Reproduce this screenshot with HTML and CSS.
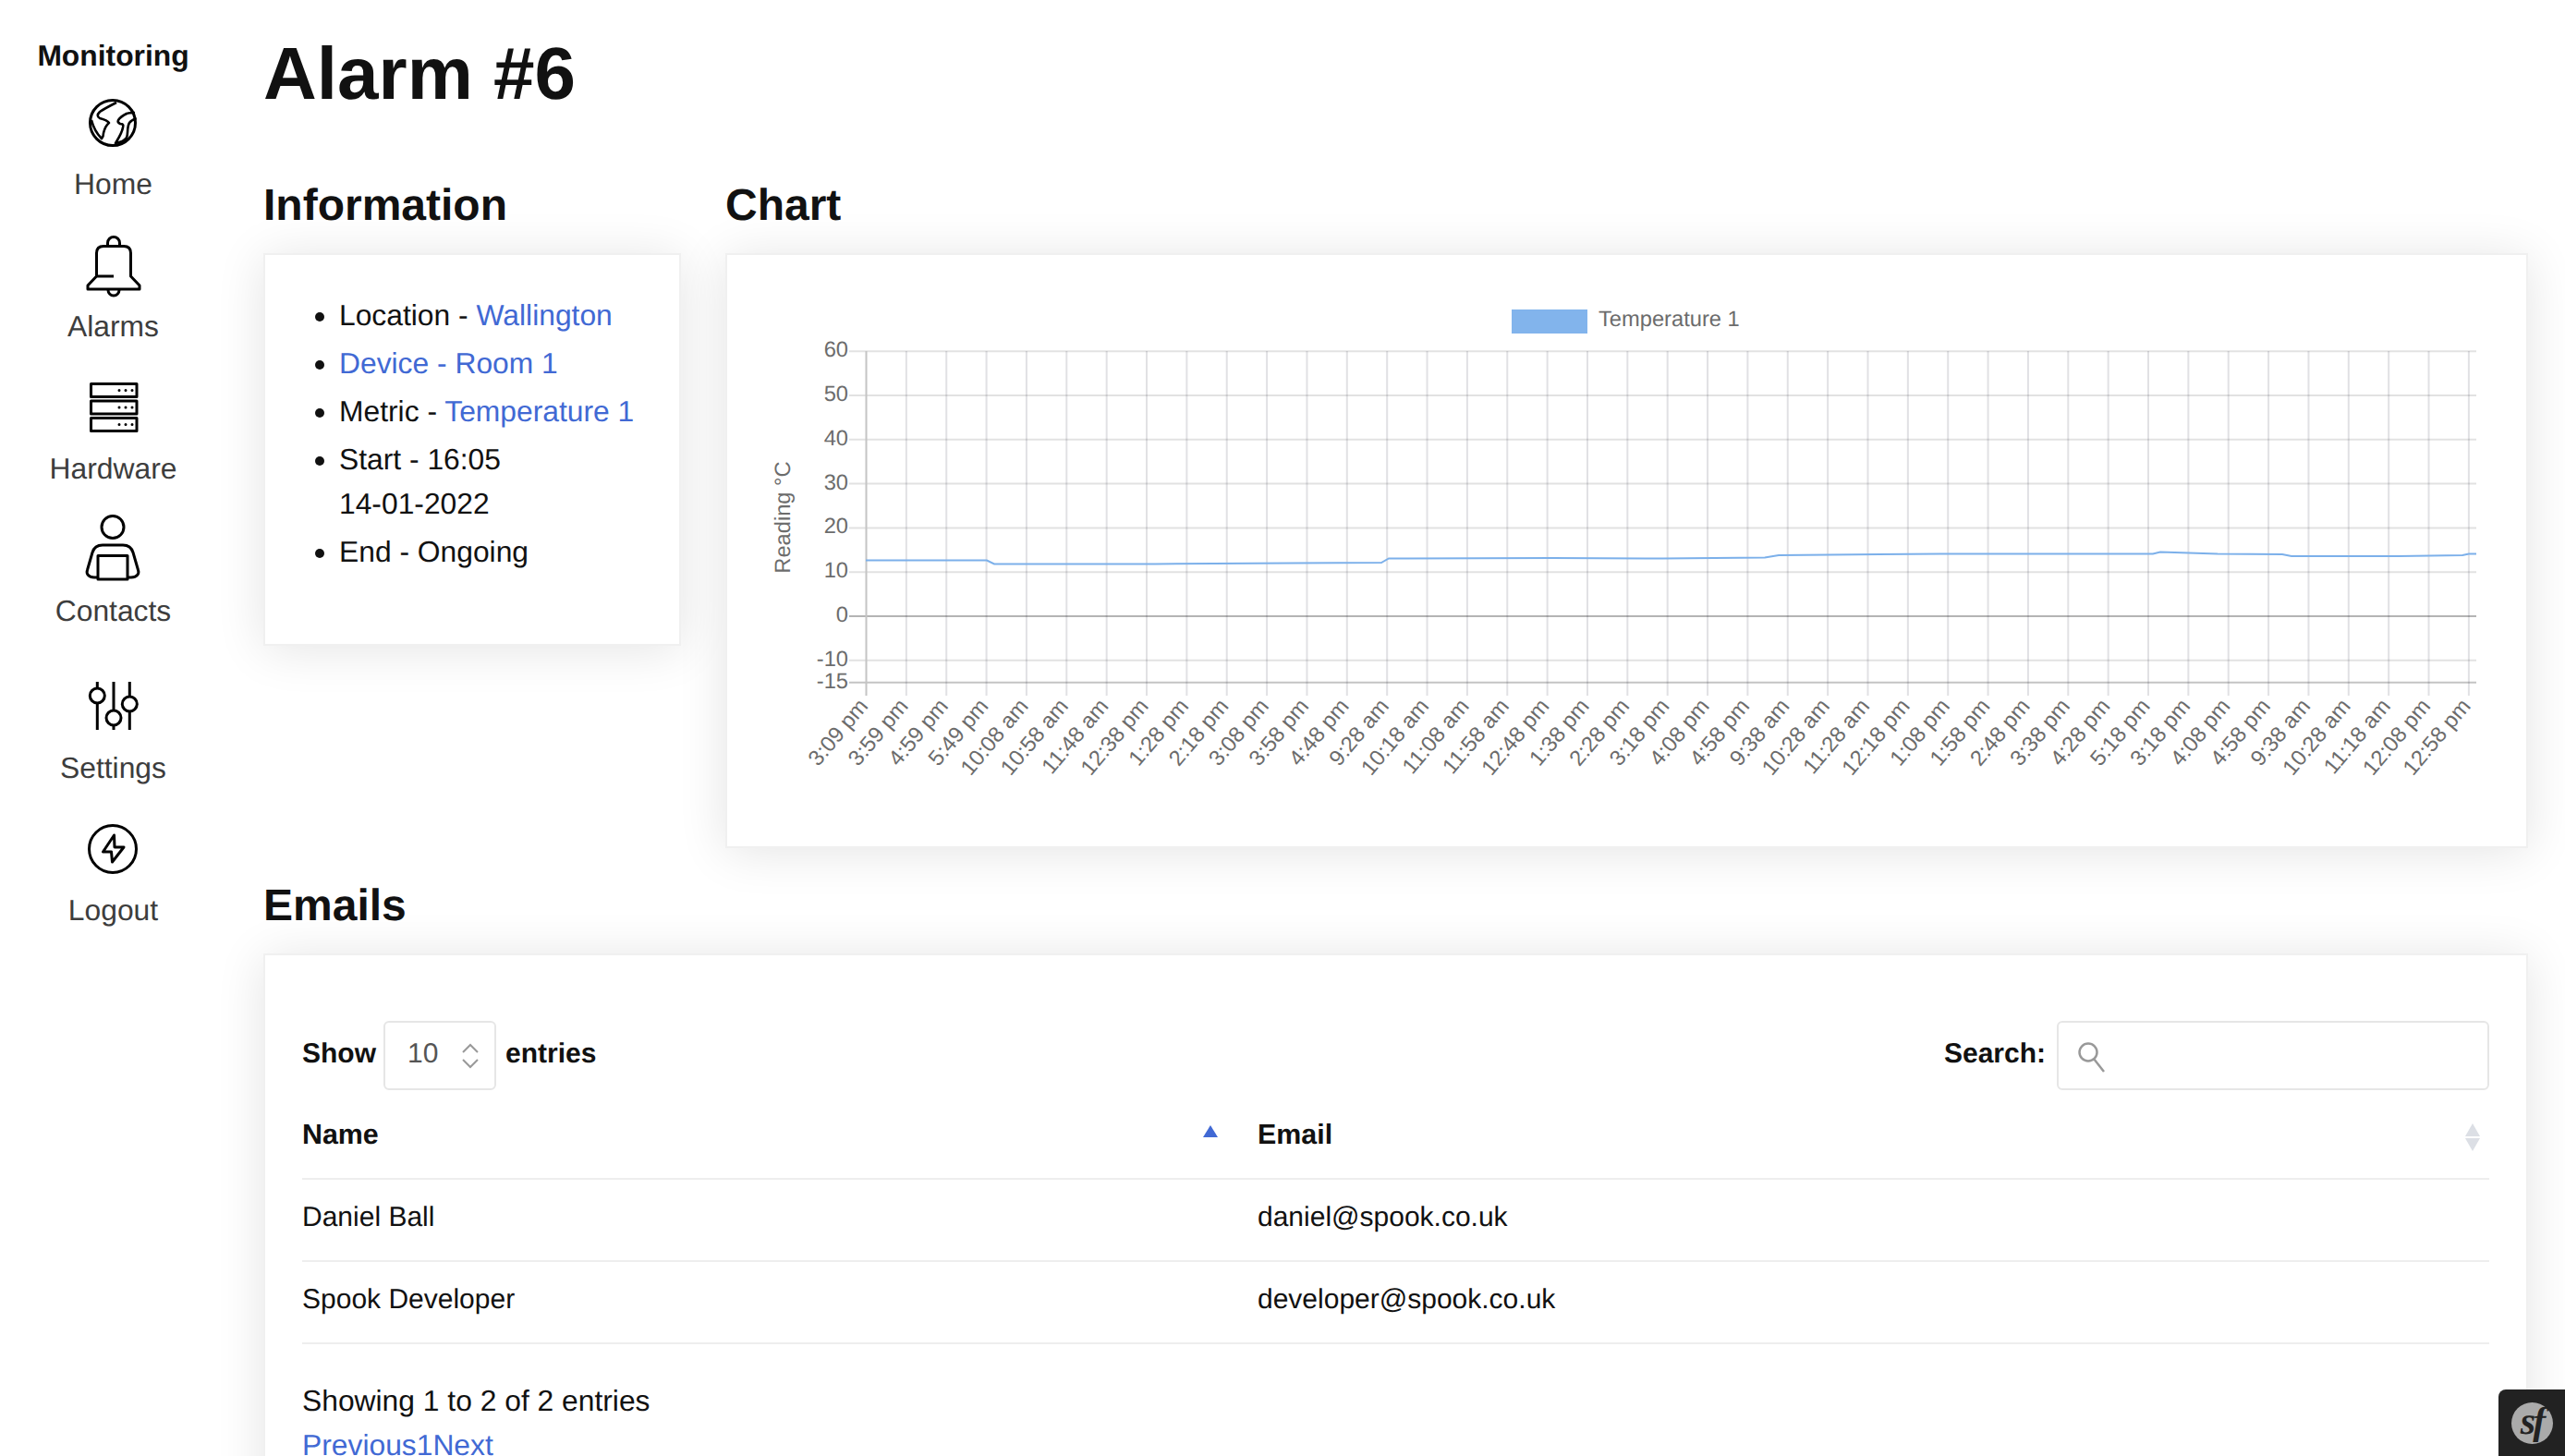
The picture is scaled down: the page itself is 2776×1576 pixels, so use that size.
FILE: index.html
```html
<!DOCTYPE html>
<html lang="en">

<head>
    <meta charset="UTF-8">
    <title>Alarm #6</title>
    <link rel="stylesheet" href="styles.css">
</head>

<body>

    <nav class="sidebar">
        <div class="brand">Monitoring</div>
        <a class="nav-item" href="#">
            <svg class="nav-icon nav-icon-globe" viewBox="0 0 64 64">
                <circle cx="32" cy="32" r="24.5" />
                <path d="M36 10C30 13 24 16 18 20C15 23 15 25 18 27C22 28 26 29 28 32C24 35 23 39 22 43C22 46 21 48 20 49C15 44 11 37 9 29" />
                <path d="M56 21C52 21 49 21 47 22C43 24 40 26 38 29C37 31 38 32 40 33C43 33 44 34 43 37C42 43 38 49 35 54C41 53 45 51 47 48C49 44 47 37 50 32C52 29 55 28 57.5 27" />
            </svg>
            <span>Home</span>
        </a>
        <a class="nav-item" href="#">
            <svg class="nav-icon" viewBox="0 0 64 64">
                <path d="M13.5 44V19Q13.5 11.5 21 11.5H43Q50.5 11.5 50.5 19V44L60 54V58H4V54L13.5 44H32" />
                <path d="M25.5 11.5V8a6.5 6.5 0 0 1 13 0V11.5" />
                <path d="M26 58v1a6 6 0 0 0 12 0v-1" />
            </svg>
            <span>Alarms</span>
        </a>
        <a class="nav-item" href="#">
            <svg class="nav-icon" viewBox="0 0 64 64">
                <rect x="7.5" y="6.5" width="49.5" height="14" />
                <rect x="7.5" y="25" width="49.5" height="14" />
                <rect x="7.5" y="43.5" width="49.5" height="14" />
                <path class="dots" d="M38 13.5h.01M45 13.5h.01M52 13.5h.01M38 32h.01M45 32h.01M52 32h.01M38 50.5h.01M45 50.5h.01M52 50.5h.01" />
            </svg>
            <span>Hardware</span>
        </a>
        <a class="nav-item" href="#">
            <svg class="nav-icon" viewBox="0 0 64 64">
                <circle cx="32" cy="7.5" r="12" />
                <path d="M16 62H12C6 62 3 58 4.5 54L10 35C11.5 30 15 27 21 27H43C49 27 52.5 30 54 35L59.5 54C61 58 58 62 52 62H48" />
                <rect x="16" y="38.5" width="32" height="25.5" />
            </svg>
            <span>Contacts</span>
        </a>
        <a class="nav-item nav-item-settings" href="#">
            <svg class="nav-icon" viewBox="0 0 64 64">
                <path d="M14.3 5V57M32 5V57M49.3 5V57" />
                <circle class="knob" cx="14.3" cy="20" r="8" />
                <circle class="knob" cx="32" cy="44" r="8" />
                <circle class="knob" cx="49.3" cy="29" r="8" />
            </svg>
            <span>Settings</span>
        </a>
        <a class="nav-item" href="#">
            <svg class="nav-icon" viewBox="0 0 64 64">
                <circle cx="32" cy="32" r="25.5" />
                <path d="M33.5 17L21.5 35H30.5L31.5 46L44 30H34Z" />
            </svg>
            <span>Logout</span>
        </a>
    </nav>

    <main class="content">
        <h1>Alarm #6</h1>

        <div class="top-row">
            <section class="info-col">
                <h2>Information</h2>
                <div class="card info-card">
                    <ul class="info-list">
                        <li>Location - <a href="#">Wallington</a></li>
                        <li><a href="#">Device - Room 1</a></li>
                        <li>Metric - <a href="#">Temperature 1</a></li>
                        <li>Start - 16:05<br>14-01-2022</li>
                        <li>End - Ongoing</li>
                    </ul>
                </div>
            </section>
            <section class="chart-col">
                <h2>Chart</h2>
                <div class="card chart-card" id="chart"></div>
            </section>
        </div>

        <h2 class="emails-title">Emails</h2>
        <div class="card emails-card">
            <div class="table-tools">
                <div class="length-control">
                    <span class="tool-label">Show</span>
                    <div class="select-box">
                        <span class="tool-label">10</span>
                        <svg class="select-arrows" viewBox="0 0 20 32">
                            <path d="M2 12L10 4L18 12M2 20L10 28L18 20" />
                        </svg>
                    </div>
                    <span class="tool-label">entries</span>
                </div>
                <div class="search-control">
                    <span class="tool-label">Search:</span>
                    <div class="search-box">
                        <svg class="search-icon" viewBox="0 0 32 32">
                            <circle cx="12" cy="12" r="9.5" />
                            <path d="M18 19L29 33" />
                        </svg>
                    </div>
                </div>
            </div>

            <table class="emails-table">
                <thead>
                    <tr>
                        <th class="col-name">
                            <div class="th-inner">Name<span class="sort-up"></span></div>
                        </th>
                        <th>
                            <div class="th-inner">Email<span class="sort-both"><i></i><i></i></span></div>
                        </th>
                    </tr>
                </thead>
                <tbody>
                    <tr>
                        <td>Daniel Ball</td>
                        <td>daniel@spook.co.uk</td>
                    </tr>
                    <tr>
                        <td>Spook Developer</td>
                        <td>developer@spook.co.uk</td>
                    </tr>
                </tbody>
            </table>

            <div class="table-info">Showing 1 to 2 of 2 entries</div>
            <div class="pager"><a href="#">Previous</a><a href="#">1</a><a href="#">Next</a></div>
        </div>
    </main>

    <div class="sf-toolbar">
        <div class="sf-logo">sf</div>
    </div>

    <script src="chart.js"></script>
</body>

</html>
```

FILE: styles.css
```css
html, body{
    height: 100%;
    overflow: hidden;
}

body{
    margin: 0;
    display: flex;
    background-color: #ffffff;
    color: #111111;
    font-family: "Liberation Sans", Arial, sans-serif;
    font-size: 31.8px;
    line-height: 48px;
    text-rendering: geometricPrecision;
}

a{
    color: #4169d4;
    text-decoration: none;
}

.sidebar{
    width: 245px;
    padding-top: 36px;
    margin-right: 40px;
    flex-shrink: 0;
    display: flex;
    flex-direction: column;
    align-items: center;
}

.brand{
    font-weight: 700;
    margin-bottom: 17px;
}

.nav-item{
    display: flex;
    flex-direction: column;
    align-items: center;
    gap: 10px;
    height: 122px;
    margin-bottom: 32px;
    color: #3d3d3d;
}

.nav-item-settings{
    margin-top: 16px;
}

.nav-icon{
    width: 64px;
    height: 64px;
    overflow: visible;
    fill: none;
    stroke: #000000;
    stroke-width: 3;
    stroke-linejoin: round;
}

.nav-icon-globe path{
    stroke-width: 2.6;
}

.nav-icon .dots{
    stroke-width: 3;
    stroke-linecap: round;
}

.nav-icon .knob{
    fill: #ffffff;
}

.content{
    flex: 1;
    min-width: 0;
    padding: 32px 40px 0 0;
}

h1{
    margin: 0 0 66px;
    font-size: 80px;
    line-height: 96px;
    font-weight: 700;
}

h2{
    margin: 0 0 22px;
    font-size: 48px;
    line-height: 58px;
    font-weight: 700;
}

.top-row{
    display: flex;
    align-items: flex-start;
    gap: 48px;
}

.info-col{
    width: 452px;
    flex-shrink: 0;
}

.chart-col{
    flex: 1;
    min-width: 0;
}

.card{
    box-sizing: border-box;
    background-color: #ffffff;
    border: 2px solid #f0f0f0;
    box-shadow: 0 4px 50px rgba(0, 0, 0, 0.11);
}

.info-card{
    height: 425px;
    padding: 41px 40px 40px;
}

.info-list{
    margin: 0;
    padding-left: 40px;
}

.info-list li{
    margin-bottom: 4px;
}

.chart-card{
    height: 644px;
}

.chart-card svg{
    display: block;
}

.chart-card .grid-h{
    stroke: #e2e2e2;
    stroke-width: 2;
}

.chart-card .grid-v{
    stroke: rgba(20, 20, 50, 0.13);
    stroke-width: 2;
}

.chart-card .axis{
    stroke: #c4c4c4;
    stroke-width: 2;
}

.chart-card .zero{
    stroke: #b4b4b4;
    stroke-width: 2;
}

.chart-card .series{
    fill: none;
    stroke: #7cb0ea;
    stroke-width: 2;
}

.chart-card .swatch{
    fill: #82b4ec;
}

.chart-card text{
    fill: #6c6c6c;
    font-size: 23.7px;
}

.emails-title{
    margin: 34px 0 22px;
}

.emails-card{
    height: 700px;
    padding: 71px 40px 0;
}

.table-tools{
    display: flex;
    justify-content: space-between;
    align-items: center;
    height: 75px;
    font-size: 30px;
    font-weight: 700;
}

.tool-label{
    padding-bottom: 3px;
}

.length-control,
.search-control{
    display: flex;
    align-items: center;
    gap: 8px;
}

.search-control{
    gap: 12px;
}

.select-box{
    box-sizing: border-box;
    display: flex;
    align-items: center;
    justify-content: space-between;
    width: 122px;
    height: 75px;
    margin-right: 2px;
    padding: 0 16px 0 24px;
    border: 2px solid #e6e6e6;
    border-radius: 6px;
    color: #555555;
    font-weight: 400;
}

.select-arrows{
    width: 20px;
    height: 32px;
    fill: none;
    stroke: #999999;
    stroke-width: 2;
}

.search-box{
    box-sizing: border-box;
    display: flex;
    align-items: center;
    width: 468px;
    height: 75px;
    padding-left: 20px;
    border: 2px solid #e6e6e6;
    border-radius: 6px;
}

.search-icon{
    width: 32px;
    height: 32px;
    overflow: visible;
    fill: none;
    stroke: #999999;
    stroke-width: 2.5;
}

.emails-table{
    width: 100%;
    border-collapse: collapse;
    font-size: 30px;
}

.emails-table th{
    height: 95px;
    padding: 0;
    text-align: left;
    font-size: 30.4px;
    font-weight: 700;
    border-bottom: 2px solid #eeeeee;
}

.emails-table .col-name{
    width: 1034px;
    padding-right: 33px;
    box-sizing: border-box;
}

.emails-table td{
    height: 81px;
    padding: 0 0 6px;
    border-bottom: 2px solid #eeeeee;
}

.th-inner{
    display: flex;
    justify-content: space-between;
    align-items: center;
    padding-right: 10px;
}

.sort-up{
    width: 0;
    height: 0;
    border-left: 8px solid transparent;
    border-right: 8px solid transparent;
    border-bottom: 13px solid #4169d4;
    margin-bottom: 6px;
}

.sort-both{
    display: flex;
    flex-direction: column;
    gap: 2px;
    margin-top: 6px;
}

.sort-both i{
    display: block;
    width: 0;
    height: 0;
    border-left: 8px solid transparent;
    border-right: 8px solid transparent;
    border-bottom: 14px solid #dcdfe5;
}

.sort-both i + i{
    border-bottom: none;
    border-top: 14px solid #dcdfe5;
}

.table-info{
    margin-top: 37px;
}

.sf-toolbar{
    position: fixed;
    right: 0;
    bottom: 0;
    width: 72px;
    height: 72px;
    display: flex;
    align-items: center;
    justify-content: center;
    background-color: #222222;
    border-top-left-radius: 8px;
}

.sf-logo{
    width: 45px;
    height: 45px;
    border-radius: 50%;
    background-color: #aaaaaa;
    color: #222222;
    font-family: "Liberation Serif", serif;
    font-style: italic;
    font-weight: 700;
    font-size: 42px;
    letter-spacing: -3px;
    line-height: 42px;
    text-align: center;
}
```

FILE: chart.js
```js
let labels = ["3:09 pm", "3:59 pm", "4:59 pm", "5:49 pm", "10:08 am", "10:58 am", "11:48 am", "12:38 pm", "1:28 pm", "2:18 pm",
    "3:08 pm", "3:58 pm", "4:48 pm", "9:28 am", "10:18 am", "11:08 am", "11:58 am", "12:48 pm", "1:38 pm", "2:28 pm",
    "3:18 pm", "4:08 pm", "4:58 pm", "9:38 am", "10:28 am", "11:28 am", "12:18 pm", "1:08 pm", "1:58 pm", "2:48 pm",
    "3:38 pm", "4:28 pm", "5:18 pm", "3:18 pm", "4:08 pm", "4:58 pm", "9:38 am", "10:28 am", "11:18 am", "12:08 pm", "12:58 pm"];

let ticks = [60, 50, 40, 30, 20, 10, 0, -10, -15];

// the series as x, y in the chart's own coordinates
let points = [[937, 606.5], [1068, 606.5], [1076, 610.5], [1250, 610.5], [1400, 609.5], [1495, 609], [1503, 604.5], [1680, 604],
    [1800, 604.5], [1910, 603.5], [1925, 601], [2100, 599.5], [2330, 599.5], [2338, 597.5], [2400, 599.5], [2470, 600],
    [2480, 602], [2596, 602], [2665, 601], [2672, 599.5], [2680, 599.5]];

let yPos = (v) => 667 - v * 4.78;
let xPos = (i) => 937.5 + i * 43.36;

let html = '<svg width="1946" height="640" viewBox="787 276 1946 640">';

html += '<rect class="swatch" x="1636" y="335" width="82" height="26" />';
html += '<text x="1730" y="353">Temperature 1</text>';
html += '<text transform="translate(855 560) rotate(-90)" text-anchor="middle">Reading °C</text>';

ticks.forEach((t) => {
    let cls = t === 0 ? "zero" : (t === -15 ? "axis" : "grid-h");
    html += `<line class="${cls}" x1="919" x2="2680" y1="${yPos(t)}" y2="${yPos(t)}" />`;
    html += `<text x="918" y="${yPos(t) + 6}" text-anchor="end">${t}</text>`;
});

labels.forEach((l, i) => {
    let x = xPos(i);
    html += `<line class="${i === 0 ? "axis" : "grid-v"}" x1="${x}" x2="${x}" y1="380" y2="753" />`;
    html += `<text transform="translate(${x + 3} 765) rotate(-50)" text-anchor="end">${l}</text>`;
});

html += `<polyline class="series" points="${points.map((p) => p.join(",")).join(" ")}" />`;
html += "</svg>";

document.getElementById("chart").innerHTML = html;
```
